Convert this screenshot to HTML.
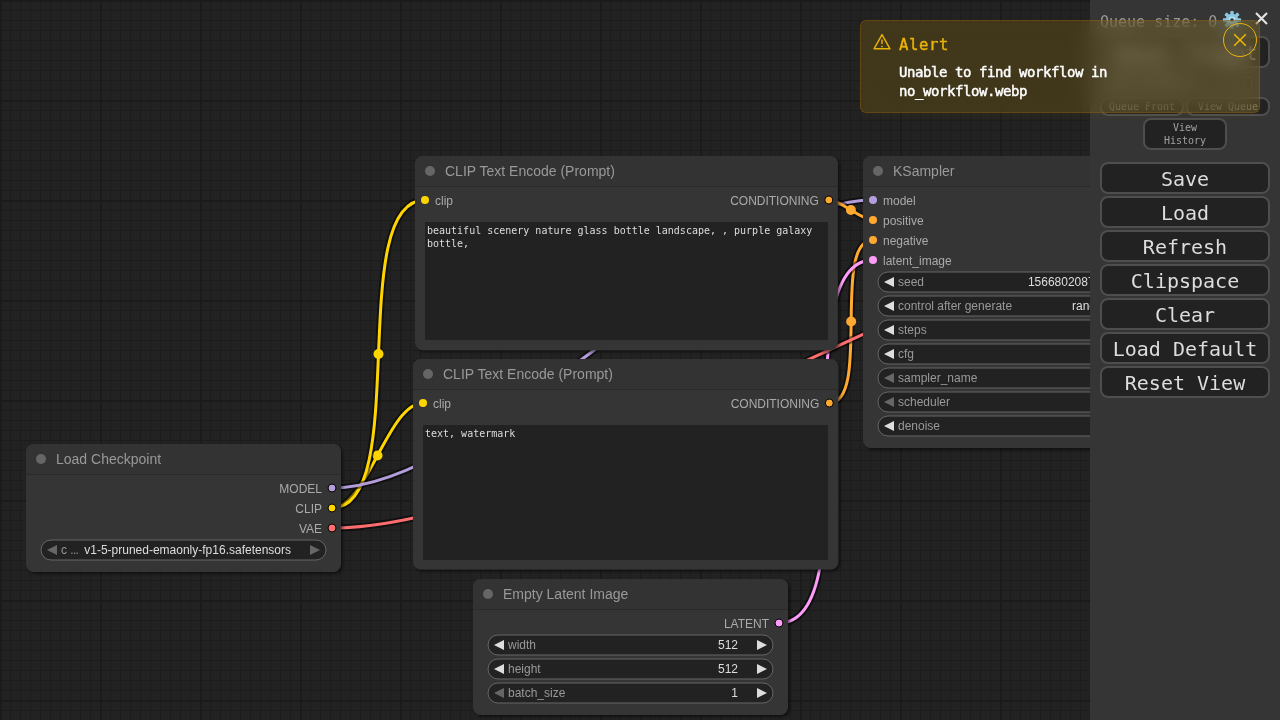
<!DOCTYPE html>
<html lang="en">
<head>
<meta charset="utf-8">
<title>ComfyUI</title>
<style>
html,body{margin:0;padding:0;width:1280px;height:720px;overflow:hidden;background:#222;}
body{position:relative;font-family:"DejaVu Sans Mono", "Liberation Mono", monospace;}
#graph{position:absolute;left:0;top:0;width:1280px;height:720px;display:block;will-change:transform;}
#graph text{font-family:"Liberation Sans", Arial, sans-serif;}
#graph .t{font-size:14px;fill:#999;}
#graph .s{font-size:12px;fill:#aaa;}
#graph .wl{font-size:12px;fill:#999;}
#graph .wv{font-size:12px;fill:#ddd;}
#graph .e{text-anchor:end;}
.ta{will-change:transform;position:absolute;box-sizing:border-box;background:#222;color:#ddd;font-family:"DejaVu Sans Mono", "Liberation Mono", monospace;font-size:10px;line-height:13px;padding:2px;white-space:pre-wrap;overflow:hidden;}
#menu{will-change:transform;position:absolute;left:1090px;top:0;width:190px;height:720px;background:#353535;color:#999;font-family:"DejaVu Sans Mono", "Liberation Mono", monospace;font-size:15px;}
#menu .b{position:absolute;box-sizing:border-box;background:#222;color:#ddd;border:2px solid #4e4e4e;border-radius:8px;text-align:center;font-family:"DejaVu Sans Mono", "Liberation Mono", monospace;}
#menu .big{left:10px;width:170px;height:32px;font-size:20px;line-height:30px;}
#menu .sm{font-size:10px;line-height:13px;color:#a0a0a0;}
#toast{position:absolute;left:860px;top:20px;width:400px;height:93px;box-sizing:border-box;border:1px solid rgba(161,98,7,0.36);border-radius:6px;background:rgba(234,179,8,0.16);-webkit-backdrop-filter:blur(10px);backdrop-filter:blur(10px);box-shadow:0 4px 8px 0 rgba(234,179,8,0.04);color:#eab308;font-family:"DejaVu Sans Mono", "Liberation Mono", monospace;}
</style>
</head>
<body>
<svg id="graph" width="1280" height="720" viewBox="0 0 1280 720">
<defs>
<pattern id="grid" x="0" y="0" width="100" height="100" patternUnits="userSpaceOnUse">
<rect width="100" height="100" fill="#222"/>
<path d="M10.5 0V100M20.5 0V100M30.5 0V100M40.5 0V100M50.5 0V100M60.5 0V100M70.5 0V100M80.5 0V100M90.5 0V100M0 10.5H100M0 20.5H100M0 30.5H100M0 40.5H100M0 50.5H100M0 60.5H100M0 70.5H100M0 80.5H100M0 90.5H100" stroke="#1c1c1c" stroke-width="1" fill="none"/>
<path d="M1 0V100M0 1H100" stroke="#1b1b1b" stroke-width="2" fill="none"/>
</pattern>
<filter id="sh" x="-5%" y="-5%" width="112%" height="115%"><feDropShadow dx="2" dy="2" stdDeviation="1.5" flood-color="#000" flood-opacity="0.5"/></filter>
</defs>
<rect width="1280" height="720" fill="url(#grid)"/>
<g>
<path d="M332 508C366.74 508 388.26 403 423 403" fill="none" stroke="rgba(0,0,0,0.5)" stroke-width="7"/>
<path d="M332 508C366.74 508 388.26 403 423 403" fill="none" stroke="#FFD500" stroke-width="3"/>
<circle cx="377.5" cy="455.5" r="5" fill="#FFD500"/>
<path d="M332 508C412.43 508 344.57 200 425 200" fill="none" stroke="rgba(0,0,0,0.5)" stroke-width="7"/>
<path d="M332 508C412.43 508 344.57 200 425 200" fill="none" stroke="#FFD500" stroke-width="3"/>
<circle cx="378.5" cy="354" r="5" fill="#FFD500"/>
<path d="M332 488C485.22 488 719.78 200 873 200" fill="none" stroke="rgba(0,0,0,0.5)" stroke-width="7"/>
<path d="M332 488C485.22 488 719.78 200 873 200" fill="none" stroke="#B39DDB" stroke-width="3"/>
<circle cx="602.5" cy="344" r="5" fill="#B39DDB"/>
<path d="M828.8 200C840.93 200 860.87 220 873 220" fill="none" stroke="rgba(0,0,0,0.5)" stroke-width="7"/>
<path d="M828.8 200C840.93 200 860.87 220 873 220" fill="none" stroke="#FFA931" stroke-width="3"/>
<circle cx="850.9" cy="210" r="5" fill="#FFA931"/>
<path d="M829.3 403C871.49 403 830.81 240 873 240" fill="none" stroke="rgba(0,0,0,0.5)" stroke-width="7"/>
<path d="M829.3 403C871.49 403 830.81 240 873 240" fill="none" stroke="#FFA931" stroke-width="3"/>
<circle cx="851.15" cy="321.5" r="5" fill="#FFA931"/>
<path d="M779 623C872.74 623 779.26 260 873 260" fill="none" stroke="rgba(0,0,0,0.5)" stroke-width="7"/>
<path d="M779 623C872.74 623 779.26 260 873 260" fill="none" stroke="#FF9CF9" stroke-width="3"/>
<circle cx="826" cy="441.5" r="5" fill="#FF9CF9"/>
<path d="M332 528C566.57 528 984.43 222 1219 222" fill="none" stroke="rgba(0,0,0,0.5)" stroke-width="7"/>
<path d="M332 528C566.57 528 984.43 222 1219 222" fill="none" stroke="#FF6E6E" stroke-width="3"/>
<circle cx="775.5" cy="375" r="5" fill="#FF6E6E"/>
</g>
<g transform="translate(26 474)">
<rect x="0" y="-30" width="315" height="128" rx="8" fill="#353535" filter="url(#sh)"/>
<rect x="0" y="0" width="315" height="1" fill="#2a2a2a"/>
<path d="M0 0V-22A8 8 0 0 1 8 -30H307A8 8 0 0 1 315 -22V0Z" fill="#333"/>
<circle cx="15" cy="-15" r="5" fill="#666"/>
<text x="30" y="-10" class="t">Load Checkpoint</text>
<circle cx="306" cy="14" r="4" fill="#B39DDB" stroke="#000" stroke-width="1"/>
<text x="296" y="19" class="s e">MODEL</text>
<circle cx="306" cy="34" r="4" fill="#FFD500" stroke="#000" stroke-width="1"/>
<text x="296" y="39" class="s e">CLIP</text>
<circle cx="306" cy="54" r="4" fill="#FF6E6E" stroke="#000" stroke-width="1"/>
<text x="296" y="59" class="s e">VAE</text>
<rect x="15" y="66" width="285" height="20" rx="10" fill="#222" stroke="#666" stroke-width="1"/>
<path d="M31 71L21 76L31 81Z" fill="#666"/>
<path d="M284 71L294 76L284 81Z" fill="#666"/>
<text x="35" y="80" class="wl">c <tspan letter-spacing="-0.7" fill="#888">...</tspan></text>
<text x="265" y="80" class="wv e">v1-5-pruned-emaonly-fp16.safetensors</text>
</g>
<g transform="translate(415 186)">
<rect x="0" y="-30" width="422.8" height="194.3" rx="8" fill="#353535" filter="url(#sh)"/>
<rect x="0" y="0" width="422.8" height="1" fill="#2a2a2a"/>
<path d="M0 0V-22A8 8 0 0 1 8 -30H414.8A8 8 0 0 1 422.8 -22V0Z" fill="#333"/>
<circle cx="15" cy="-15" r="5" fill="#666"/>
<text x="30" y="-10" class="t">CLIP Text Encode (Prompt)</text>
<circle cx="10" cy="14" r="4" fill="#FFD500"/>
<text x="20" y="19" class="s">clip</text>
<circle cx="413.8" cy="14" r="4" fill="#FFA931" stroke="#000" stroke-width="1"/>
<text x="403.8" y="19" class="s e">CONDITIONING</text>
</g>
<g transform="translate(413 389)">
<rect x="0" y="-30" width="425.3" height="210.6" rx="8" fill="#353535" filter="url(#sh)"/>
<rect x="0" y="0" width="425.3" height="1" fill="#2a2a2a"/>
<path d="M0 0V-22A8 8 0 0 1 8 -30H417.3A8 8 0 0 1 425.3 -22V0Z" fill="#333"/>
<circle cx="15" cy="-15" r="5" fill="#666"/>
<text x="30" y="-10" class="t">CLIP Text Encode (Prompt)</text>
<circle cx="10" cy="14" r="4" fill="#FFD500"/>
<text x="20" y="19" class="s">clip</text>
<circle cx="416.3" cy="14" r="4" fill="#FFA931" stroke="#000" stroke-width="1"/>
<text x="406.3" y="19" class="s e">CONDITIONING</text>
</g>
<g transform="translate(473 609)">
<rect x="0" y="-30" width="315" height="136" rx="8" fill="#353535" filter="url(#sh)"/>
<rect x="0" y="0" width="315" height="1" fill="#2a2a2a"/>
<path d="M0 0V-22A8 8 0 0 1 8 -30H307A8 8 0 0 1 315 -22V0Z" fill="#333"/>
<circle cx="15" cy="-15" r="5" fill="#666"/>
<text x="30" y="-10" class="t">Empty Latent Image</text>
<circle cx="306" cy="14" r="4" fill="#FF9CF9" stroke="#000" stroke-width="1"/>
<text x="296" y="19" class="s e">LATENT</text>
<rect x="15" y="26" width="285" height="20" rx="10" fill="#222" stroke="#666" stroke-width="1"/>
<path d="M31 31L21 36L31 41Z" fill="#ddd"/>
<path d="M284 31L294 36L284 41Z" fill="#ddd"/>
<text x="35" y="40" class="wl">width</text>
<text x="265" y="40" class="wv e">512</text>
<rect x="15" y="50" width="285" height="20" rx="10" fill="#222" stroke="#666" stroke-width="1"/>
<path d="M31 55L21 60L31 65Z" fill="#ddd"/>
<path d="M284 55L294 60L284 65Z" fill="#ddd"/>
<text x="35" y="64" class="wl">height</text>
<text x="265" y="64" class="wv e">512</text>
<rect x="15" y="74" width="285" height="20" rx="10" fill="#222" stroke="#666" stroke-width="1"/>
<path d="M31 79L21 84L31 89Z" fill="#666"/>
<path d="M284 79L294 84L284 89Z" fill="#ddd"/>
<text x="35" y="88" class="wl">batch_size</text>
<text x="265" y="88" class="wv e">1</text>
</g>
<g transform="translate(863 186)">
<rect x="0" y="-30" width="315" height="292" rx="8" fill="#353535" filter="url(#sh)"/>
<rect x="0" y="0" width="315" height="1" fill="#2a2a2a"/>
<path d="M0 0V-22A8 8 0 0 1 8 -30H307A8 8 0 0 1 315 -22V0Z" fill="#333"/>
<circle cx="15" cy="-15" r="5" fill="#666"/>
<text x="30" y="-10" class="t">KSampler</text>
<circle cx="10" cy="14" r="4" fill="#B39DDB"/>
<text x="20" y="19" class="s">model</text>
<circle cx="10" cy="34" r="4" fill="#FFA931"/>
<text x="20" y="39" class="s">positive</text>
<circle cx="10" cy="54" r="4" fill="#FFA931"/>
<text x="20" y="59" class="s">negative</text>
<circle cx="10" cy="74" r="4" fill="#FF9CF9"/>
<text x="20" y="79" class="s">latent_image</text>
<circle cx="306" cy="14" r="4" fill="#FF9CF9" stroke="#000" stroke-width="1"/>
<text x="296" y="19" class="s e">LATENT</text>
<rect x="15" y="86" width="285" height="20" rx="10" fill="#222" stroke="#666" stroke-width="1"/>
<path d="M31 91L21 96L31 101Z" fill="#ddd"/>
<path d="M284 91L294 96L284 101Z" fill="#ddd"/>
<text x="35" y="100" class="wl">seed</text>
<text x="265" y="100" class="wv e">156680208700286</text>
<rect x="15" y="110" width="285" height="20" rx="10" fill="#222" stroke="#666" stroke-width="1"/>
<path d="M31 115L21 120L31 125Z" fill="#ddd"/>
<path d="M284 115L294 120L284 125Z" fill="#ddd"/>
<text x="35" y="124" class="wl">control after generate</text>
<text x="265" y="124" class="wv e">randomize</text>
<rect x="15" y="134" width="285" height="20" rx="10" fill="#222" stroke="#666" stroke-width="1"/>
<path d="M31 139L21 144L31 149Z" fill="#ddd"/>
<path d="M284 139L294 144L284 149Z" fill="#ddd"/>
<text x="35" y="148" class="wl">steps</text>
<text x="265" y="148" class="wv e">20</text>
<rect x="15" y="158" width="285" height="20" rx="10" fill="#222" stroke="#666" stroke-width="1"/>
<path d="M31 163L21 168L31 173Z" fill="#ddd"/>
<path d="M284 163L294 168L284 173Z" fill="#ddd"/>
<text x="35" y="172" class="wl">cfg</text>
<text x="265" y="172" class="wv e">8.0</text>
<rect x="15" y="182" width="285" height="20" rx="10" fill="#222" stroke="#666" stroke-width="1"/>
<path d="M31 187L21 192L31 197Z" fill="#666"/>
<path d="M284 187L294 192L284 197Z" fill="#ddd"/>
<text x="35" y="196" class="wl">sampler_name</text>
<text x="265" y="196" class="wv e">euler</text>
<rect x="15" y="206" width="285" height="20" rx="10" fill="#222" stroke="#666" stroke-width="1"/>
<path d="M31 211L21 216L31 221Z" fill="#666"/>
<path d="M284 211L294 216L284 221Z" fill="#ddd"/>
<text x="35" y="220" class="wl">scheduler</text>
<text x="265" y="220" class="wv e">normal</text>
<rect x="15" y="230" width="285" height="20" rx="10" fill="#222" stroke="#666" stroke-width="1"/>
<path d="M31 235L21 240L31 245Z" fill="#ddd"/>
<path d="M284 235L294 240L284 245Z" fill="#ddd"/>
<text x="35" y="244" class="wl">denoise</text>
<text x="265" y="244" class="wv e">1.00</text>
</g>
</svg>
<div class="ta" style="left:425px;top:222px;width:402.8px;height:118.3px;">beautiful scenery nature glass bottle landscape, , purple galaxy bottle,</div>
<div class="ta" style="left:423px;top:425px;width:405.3px;height:134.6px;">text, watermark</div>

<div id="menu">
<div style="position:absolute;left:10px;top:13px;white-space:pre;">Queue size: 0</div>
<svg style="position:absolute;left:132.3px;top:9.8px;" width="20" height="20" viewBox="0 0 20 20"><g fill="#8cc6e2"><circle cx="10" cy="10" r="6.3"/><rect id="tth" x="8.3" y="0.9" width="3.4" height="18.2" rx="0.7"/><use href="#tth" transform="rotate(45 10 10)"/><use href="#tth" transform="rotate(90 10 10)"/><use href="#tth" transform="rotate(135 10 10)"/></g><circle cx="10" cy="10" r="3.4" fill="#b4e0f1"/><circle cx="10" cy="10" r="1.8" fill="#2c3338"/></svg>
<svg style="position:absolute;left:165.4px;top:12.2px;" width="13" height="13" viewBox="0 0 13 13"><path d="M1 1L12 12M12 1L1 12" stroke="#e4e4e4" stroke-width="2.1" fill="none"/></svg>
<div class="b big" style="top:36px;">Queue Prompt</div>
<div style="position:absolute;left:20px;top:75px;font-size:10px;color:#999;">Extra options</div>
<div style="position:absolute;left:148.5px;top:77px;width:11px;height:11px;border:1px solid #666;border-radius:2px;background:#2b2b2b;"></div>
<div class="b sm" style="left:10px;top:97px;width:84px;height:19px;line-height:16px;">Queue Front</div>
<div class="b sm" style="left:96px;top:97px;width:84px;height:19px;line-height:16px;">View Queue</div>
<div class="b sm" style="left:53px;top:118px;width:84px;height:32px;padding-top:1px;">View<br>History</div>
<div class="b big" style="top:162px;">Save</div>
<div class="b big" style="top:196px;">Load</div>
<div class="b big" style="top:230px;">Refresh</div>
<div class="b big" style="top:264px;">Clipspace</div>
<div class="b big" style="top:298px;">Clear</div>
<div class="b big" style="top:332px;">Load Default</div>
<div class="b big" style="top:366px;">Reset View</div>
</div>

<div id="toast">
<svg style="position:absolute;left:12px;top:12px;" width="18" height="18" viewBox="0 0 14 14"><path d="M7 1.2L13.2 12.3H0.8Z" fill="none" stroke="#eab308" stroke-width="1.1" stroke-linejoin="round"/><path d="M7 5V8.6M7 10V11" stroke="#eab308" stroke-width="1.1" fill="none"/></svg>
<div style="position:absolute;left:38px;top:12.3px;font-size:15.6px;letter-spacing:0.61px;-webkit-text-stroke:0.4px #eab308;line-height:24px;color:#eab308;white-space:pre;">Alert</div>
<div style="position:absolute;left:38px;top:42px;font-size:14px;letter-spacing:-0.43px;-webkit-text-stroke:0.45px #fff;line-height:18.5px;color:#fff;white-space:pre;">Unable to find workflow in
no_workflow.webp</div>
<div style="position:absolute;left:362px;top:2px;width:32px;height:32px;border:1px solid #eab308;border-radius:50%;"></div>
<svg style="position:absolute;left:372px;top:12px;" width="14" height="14" viewBox="0 0 14 14"><path d="M1.2 1.2L12.8 12.8M12.8 1.2L1.2 12.8" stroke="#eab308" stroke-width="1.6" fill="none"/></svg>
</div>
</body>
</html>
